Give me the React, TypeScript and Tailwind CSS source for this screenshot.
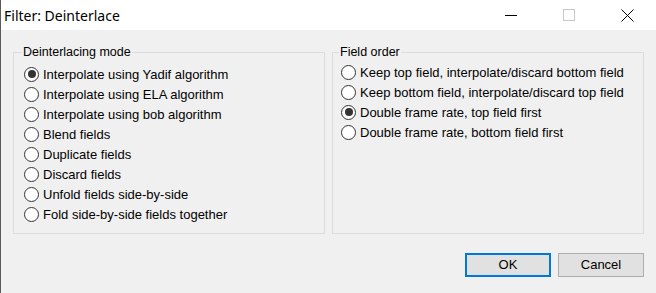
const ui = { fontFamily: '"Liberation Sans", Arial, sans-serif' };

function Radio({ label, checked }: { label: string; checked?: boolean }) {
  return (
    <div className="flex h-[20px] items-center">
      <span className="flex h-[15px] w-[15px] shrink-0 items-center justify-center rounded-full border border-[#333] bg-white">
        {checked && <span className="h-[8px] w-[8px] rounded-full bg-[#333]" />}
      </span>
      <span className="ml-[4px] whitespace-nowrap text-[13px] leading-[15px] text-black">{label}</span>
    </div>
  );
}

const modes = [
  "Interpolate using Yadif algorithm",
  "Interpolate using ELA algorithm",
  "Interpolate using bob algorithm",
  "Blend fields",
  "Duplicate fields",
  "Discard fields",
  "Unfold fields side-by-side",
  "Fold side-by-side fields together",
];

const orders = [
  "Keep top field, interpolate/discard bottom field",
  "Keep bottom field, interpolate/discard top field",
  "Double frame rate, top field first",
  "Double frame rate, bottom field first",
];

export default function App() {
  return (
    <div className="h-[293px] w-[656px] overflow-hidden border-l border-[#5a5a5a] bg-[#f0f0f0]" style={ui}>
      <div className="flex h-[30px] items-center bg-white pl-[3px]">
        <span className="flex-1 text-[14px] text-black" style={{ fontFamily: '"Noto Sans", sans-serif' }}>
          Filter: Deinterlace
        </span>
        <div className="flex h-full">
          <div className="flex w-[58px] items-center justify-center">
            <span className="h-px w-[12px] bg-black" />
          </div>
          <div className="flex w-[58px] items-center justify-center">
            <span className="h-[12px] w-[12px] border border-[#c8c8c8]" />
          </div>
          <div className="flex w-[58px] items-center justify-center">
            <svg width="13" height="13" viewBox="0 0 13 13">
              <path d="M0.5 0.5 L12.5 12.5 M12.5 0.5 L0.5 12.5" stroke="#000" strokeWidth="1" />
            </svg>
          </div>
        </div>
      </div>

      <div className="px-[12px] pt-[15px]">
        <div className="grid grid-cols-[312px_312px] gap-[7px]">
          <fieldset className="h-[189px] border border-[#dcdcdc] px-[10px]">
            <legend className="ml-[-2px] px-[1px] text-[12.5px] leading-[14px]">Deinterlacing mode</legend>
            <div className="mt-[5px] flex flex-col">
              {modes.map((m, i) => (
                <Radio key={m} label={m} checked={i === 0} />
              ))}
            </div>
          </fieldset>
          <fieldset className="h-[189px] border border-[#dcdcdc] px-[8px]">
            <legend className="ml-[-2px] px-[1px] text-[12.5px] leading-[14px]">Field order</legend>
            <div className="mt-[3px] flex flex-col">
              {orders.map((m, i) => (
                <Radio key={m} label={m} checked={i === 2} />
              ))}
            </div>
          </fieldset>
        </div>

        <div className="mt-[19px] flex justify-end gap-[7px]">
          <button className="h-[24px] w-[86px] border-2 border-[#0078d7] bg-[#e1e1e1] text-[13px] text-black">OK</button>
          <button className="h-[24px] w-[86px] border border-[#adadad] bg-[#e1e1e1] text-[13px] text-black">Cancel</button>
        </div>
      </div>
    </div>
  );
}
